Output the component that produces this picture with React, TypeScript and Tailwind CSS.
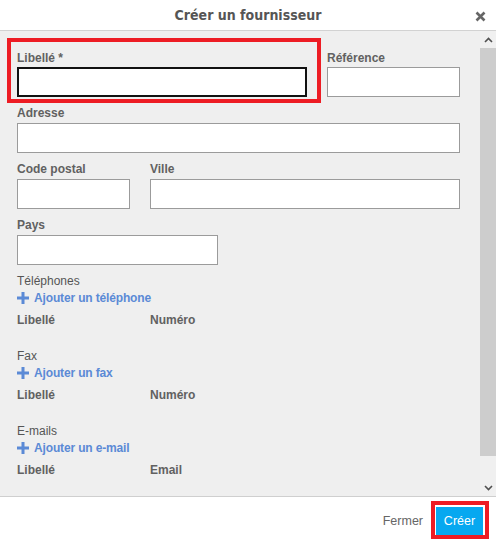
import React from "react"

const label = "block text-[12px] leading-[14px] font-bold text-[#616161]"
const input = "block h-[30px] bg-white border border-[#9b9b9b]"

function Plus() {
  return (
    <svg width="12" height="12" viewBox="0 0 12 12" className="shrink-0">
      <rect x="4.5" y="0" width="3" height="12" fill="#5b8ad6" />
      <rect x="0" y="4.5" width="12" height="3" fill="#5b8ad6" />
    </svg>
  )
}

function Section({ title, link, col2, first }: { title: string; link: string; col2: string; first?: boolean }) {
  return (
    <div className={first ? "mt-[9px]" : "mt-[22px]"}>
      <div className="text-[12px] leading-[14px] text-[#555]">{title}</div>
      <div className="mt-[3px] flex items-center gap-[5px] text-[12px] leading-[14px] font-bold text-[#5b8ad6] tracking-[-0.15px]">
        <Plus />
        {link}
      </div>
      <div className="mt-[8px] flex text-[12px] leading-[14px] font-bold text-[#616161]">
        <span className="w-[133px]">Libellé</span>
        <span>{col2}</span>
      </div>
    </div>
  )
}

export default function App() {
  return (
    <div className="relative w-[496px] h-[540px] bg-white flex flex-col font-['Liberation_Sans',Arial,sans-serif]">
      {/* En-tête */}
      <header className="relative h-[31px] shrink-0 border-b border-[#d2d2d2] flex items-center justify-center">
        <h1 className="font-['DejaVu_Sans_Condensed','DejaVu_Sans',sans-serif] font-bold text-[14px] text-[#555]">
          Créer un fournisseur
        </h1>
        <svg width="11" height="11" viewBox="0 0 11 11" className="absolute right-[10px] top-[11px]">
          <path d="M1.5 1.5 L9.5 9.5 M9.5 1.5 L1.5 9.5" stroke="#666" strokeWidth="2.6" />
        </svg>
      </header>

      {/* Corps */}
      <div className="h-[465px] shrink-0 flex bg-[#efefef]">
        <div className="flex-1 pl-[17px] pt-[20px]">
          <div className="flex gap-[20px]">
            <div>
              <span className={label}>Libellé *</span>
              <div className="mt-[2px] h-[30px] w-[290px] bg-white border-2 border-[#111]" />
            </div>
            <div>
              <span className={label}>Référence</span>
              <div className={`${input} mt-[2px] w-[133px]`} />
            </div>
          </div>

          <div className="mt-[9px]">
            <span className={label}>Adresse</span>
            <div className={`${input} mt-[3px] w-[443px]`} />
          </div>

          <div className="mt-[9px] flex gap-[20px]">
            <div>
              <span className={label}>Code postal</span>
              <div className={`${input} mt-[3px] w-[113px]`} />
            </div>
            <div>
              <span className={label}>Ville</span>
              <div className={`${input} mt-[3px] w-[310px]`} />
            </div>
          </div>

          <div className="mt-[9px]">
            <span className={label}>Pays</span>
            <div className={`${input} mt-[3px] w-[201px]`} />
          </div>

          <Section first title="Téléphones" link="Ajouter un téléphone" col2="Numéro" />
          <Section title="Fax" link="Ajouter un fax" col2="Numéro" />
          <Section title="E-mails" link="Ajouter un e-mail" col2="Email" />
        </div>

        {/* Barre de défilement */}
        <div className="w-[16px] shrink-0 flex flex-col bg-[#f0f0f0]">
          <div className="h-[17px] flex items-center justify-center">
            <svg width="9" height="6" viewBox="0 0 9 6">
              <path d="M1 5 L4.5 1.5 L8 5" fill="none" stroke="#505050" strokeWidth="1.6" />
            </svg>
          </div>
          <div className="h-[408px] bg-[#cdcdcd]" />
          <div className="flex-1" />
          <div className="h-[17px] flex items-center justify-center">
            <svg width="9" height="6" viewBox="0 0 9 6">
              <path d="M1 1 L4.5 4.5 L8 1" fill="none" stroke="#505050" strokeWidth="1.6" />
            </svg>
          </div>
        </div>
      </div>

      {/* Pied */}
      <footer className="flex-1 border-t border-[#cfcfcf] flex items-start justify-end pr-[13px] pt-[10px] gap-[13px]">
        <span className="mt-[7px] text-[12.5px] leading-[14px] text-[#666]">Fermer</span>
        <button className="h-[28px] w-[47px] bg-[#06a8f0] text-white text-[12.5px]">Créer</button>
      </footer>

      {/* Surlignages */}
      <div className="absolute left-[7px] top-[38px] w-[314px] h-[65px] border-4 border-[#ed1c24]" />
      <div className="absolute left-[431px] top-[501px] w-[58px] h-[38px] border-4 border-[#ed1c24]" />
    </div>
  )
}
